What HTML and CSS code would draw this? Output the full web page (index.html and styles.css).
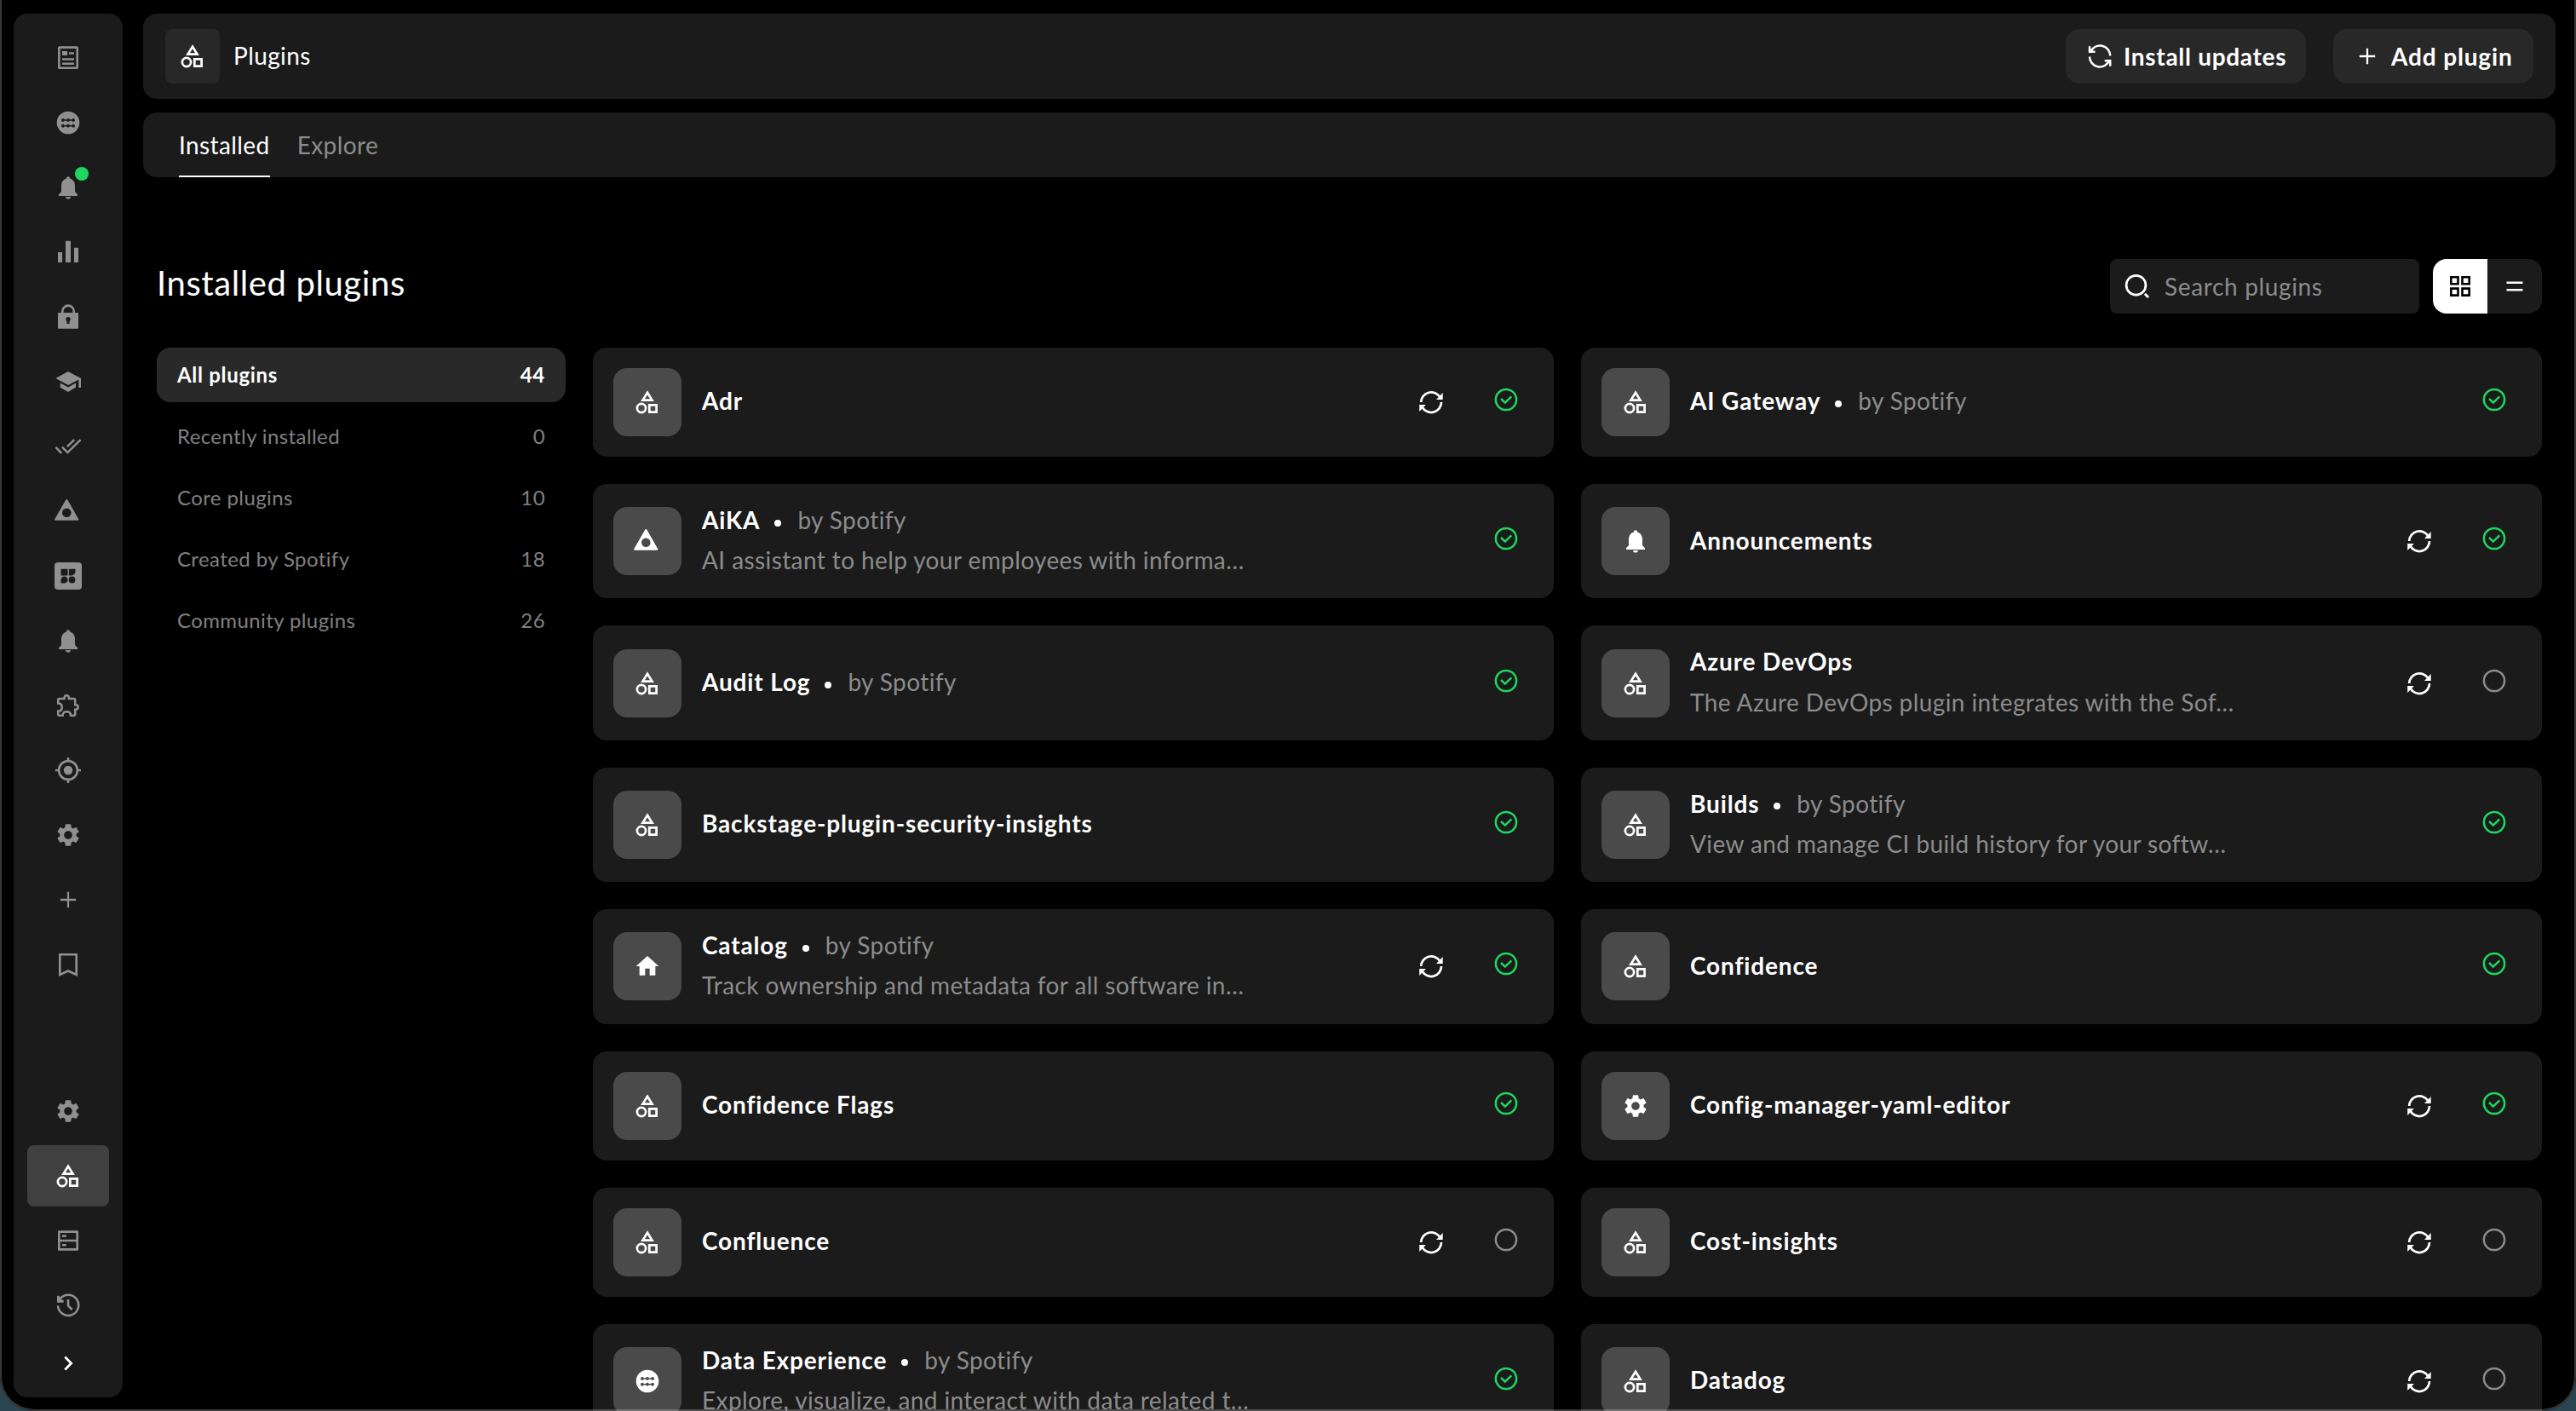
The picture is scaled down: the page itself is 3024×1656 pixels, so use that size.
FILE: index.html
```html
<!DOCTYPE html>
<html lang="en">
<head>
    <meta charset="UTF-8">
    <title>Plugins</title>
    <link rel="stylesheet" href="styles.css">
</head>
<body>
    <!-- Icon sprite -->
    <svg class="sprite" xmlns="http://www.w3.org/2000/svg">
        <symbol id="i-shapes" viewBox="0 0 32 32"><g fill="none" stroke="currentColor" stroke-width="2.7"><path d="M16 4.8 21.5 13.6H10.5z"/><circle cx="9" cy="23" r="5.1"/><path d="M18.3 19.3h8.3v8.3h-8.3z"/></g></symbol>
        <symbol id="i-article" viewBox="0 0 32 32"><rect x="5.3" y="3.6" width="21.4" height="24.2" rx=".6" fill="none" stroke="currentColor" stroke-width="2.6"/><path fill="currentColor" d="M9 8h6v5H9zM17 9.2h6v2.6h-6zM9 16.2h14v2.6H9zM9 21.4h14V24H9z"/></symbol>
        <symbol id="i-data" viewBox="0 0 32 32"><path fill="currentColor" fill-rule="evenodd" d="M16 2.7a13.3 13.3 0 1 1 0 26.6 13.3 13.3 0 0 1 0-26.6zM10 11a2 2 0 0 0 0 4 2 2 0 0 0 1.7-1.2h2.5a2 2 0 0 0 3.6 0h2.5A2 2 0 0 0 22 15a2 2 0 0 0 0-4 2 2 0 0 0-1.7 1.2h-2.5a2 2 0 0 0-3.6 0h-2.5A2 2 0 0 0 10 11zm0 6.8a2 2 0 0 0 0 4 2 2 0 0 0 1.7-1.2h2.5a2 2 0 0 0 3.6 0h2.5a2 2 0 0 0 1.7 1.2 2 2 0 0 0 0-4 2 2 0 0 0-1.7 1.2h-2.5a2 2 0 0 0-3.6 0h-2.5a2 2 0 0 0-1.7-1.2z"/></symbol>
        <symbol id="i-bell" viewBox="0 0 32 32"><path fill="currentColor" d="M16 3.3c1.3 0 2 .9 2 2.2 4 1 6 4.5 6 8.5v7l3 3.3V26H5v-1.7L8 21v-7c0-4 2-7.5 6-8.5 0-1.3.7-2.2 2-2.2zM13 27h6c0 1.6-1.3 2.6-3 2.6s-3-1-3-2.6z"/></symbol>
        <symbol id="i-bars" viewBox="0 0 32 32"><path fill="currentColor" d="M4 16h5v12H4zM13 2.7h6V28h-6zM23 10.7h5V28h-5z"/></symbol>
        <symbol id="i-lock" viewBox="0 0 32 32"><path fill="none" stroke="currentColor" stroke-width="2.6" d="M9.3 12V9.3a6.7 6.7 0 0 1 13.4 0V12"/><path fill="currentColor" fill-rule="evenodd" d="M5 11h22a1 1 0 0 1 1 1v16.700a1 1 0 0 1-1 1H5a1 1 0 0 1-1-1V12a1 1 0 0 1 1-1zm11 5a2.700 2.700 0 0 0-1.600 4.900V24h3.200v-3.100A2.700 2.700 0 0 0 16 16z"/></symbol>
        <symbol id="i-school" viewBox="0 0 32 32"><path fill="currentColor" d="M16 4 31 12v11h-2.700v-9.500L16 20 1.300 12zM6.700 17.400 16 22.500l9-5v5L16 28l-9.300-5.300z"/></symbol>
        <symbol id="i-done" viewBox="0 0 32 32"><path fill="none" stroke="currentColor" stroke-width="2.5" d="M8.900 16.600 15.400 23.100 30.600 8.200M14.900 16.200 23.200 8.200M1.500 16.900 8.200 23.800"/></symbol>
        <symbol id="i-aika" viewBox="0 0 32 32"><path fill="currentColor" fill-rule="evenodd" d="M13.200 2.700a1.300 1.300 0 0 1 2.200 0L28.200 25.200c.4.8 0 1.500-.8 1.500H1.100c-.8 0-1.200-.7-.8-1.500zM14.300 12.400a5.300 5.300 0 1 0 0 10.600 5.300 5.300 0 0 0 0-10.600z"/></symbol>
        <symbol id="i-blocks" viewBox="0 0 32 32"><path fill="currentColor" fill-rule="evenodd" d="M4 0h24a4 4 0 0 1 4 4v24a4 4 0 0 1-4 4H4a4 4 0 0 1-4-4V4a4 4 0 0 1 4-4zM8.200 7.700c-.4 0-.7.3-.7.7v6.400c0 .4.3.7.7.7h7.300V7.700zm8.700 0v7.800h2.800c2.800 0 4.800-2 4.800-4.900V8.400c0-.4-.3-.7-.7-.7zM11.500 16.600c-2.400 0-4 1.700-4 4v3.100c0 .4.3.7.7.7h3.300c2.400 0 4-1.700 4-3.900s-1.600-3.900-4-3.900zm9 0a3.900 3.900 0 1 0 0 7.800 3.900 3.900 0 0 0 0-7.800z"/></symbol>
        <symbol id="i-puzzle" viewBox="0 0 32 32"><path fill="none" stroke="currentColor" stroke-width="2.5" d="M5.400 7.900h6.200V6.800a2.600 2.600 0 0 1 5.300 0v1.100H23a1.200 1.200 0 0 1 1.200 1.200v6.200h.7a2.700 2.700 0 0 1 0 5.400h-.7v5.900a1.200 1.200 0 0 1-1.200 1.200h-4c0-3-2-4.600-4.700-4.600s-4.700 1.600-4.700 4.600H5.400a1.200 1.200 0 0 1-1.200-1.200v-4c3 0 4.600-2 4.600-4.600s-1.600-4.600-4.600-4.600V9.100a1.200 1.200 0 0 1 1.200-1.200z"/></symbol>
        <symbol id="i-target" viewBox="0 0 32 32"><circle cx="16" cy="16" r="10.9" fill="none" stroke="currentColor" stroke-width="2.6"/><circle cx="16" cy="16" r="5.3" fill="currentColor"/><path stroke="currentColor" stroke-width="2.6" d="M16 1v4.5M16 26.5V31M1 16h4.5M26.5 16H31"/></symbol>
        <symbol id="i-gear" viewBox="0 0 24 24"><path fill="currentColor" d="M19.140 12.940c.04-.3.060-.61.060-.94 0-.32-.02-.64-.07-.94l2.030-1.580c.18-.14.230-.41.120-.61l-1.920-3.320c-.12-.22-.37-.29-.59-.22l-2.390.96c-.5-.38-1.030-.7-1.620-.94l-.36-2.540c-.04-.24-.24-.41-.48-.41h-3.840c-.24 0-.43.170-.47.410l-.36 2.540c-.59.240-1.130.570-1.620.940l-2.390-.96c-.22-.08-.47 0-.59.220L2.740 8.870c-.12.210-.08.470.12.610l2.030 1.580c-.05.300-.09.630-.09.940s.02.640.070.940l-2.030 1.580c-.18.140-.23.410-.12.610l1.920 3.320c.12.220.37.290.59.220l2.390-.96c.5.380 1.030.700 1.620.940l.36 2.540c.05.240.24.410.48.410h3.840c.24 0 .44-.17.470-.41l.36-2.540c.59-.24 1.130-.56 1.620-.94l2.390.96c.22.080.47 0 .59-.22l1.920-3.320c.12-.22.070-.47-.12-.61zM12 15.600c-1.980 0-3.600-1.620-3.600-3.600s1.620-3.600 3.600-3.600 3.600 1.620 3.600 3.600-1.620 3.600-3.600 3.600z"/></symbol>
        <symbol id="i-plus" viewBox="0 0 32 32"><path stroke="currentColor" stroke-width="2.3" d="M16 6.800v18.400M6.800 16h18.400"/></symbol>
        <symbol id="i-bookmark" viewBox="0 0 32 32"><path fill="none" stroke="currentColor" stroke-width="2.6" d="M6.300 4.300h19.400v23.600L16 23.500l-9.700 4.400z"/></symbol>
        <symbol id="i-server" viewBox="0 0 32 32"><path fill="none" stroke="currentColor" stroke-width="2.6" stroke-linejoin="round" d="M5.300 5.600h21.400v20.800H5.300zM5.300 16h21.400"/><path fill="currentColor" d="M9 9.300h4.700V12H9zM9 19.900h4.700v2.700H9z"/></symbol>
        <symbol id="i-history" viewBox="0 0 32 32"><path fill="none" stroke="currentColor" stroke-width="2.6" d="M4 16.500A12.100 12.100 0 1 0 6.300 8.700"/><path fill="none" stroke="currentColor" stroke-width="2.6" d="M16 9v7.300l4.700 4.700"/><path fill="currentColor" d="M3 4.700h2.600l1 4 4.100 1.400v2.600H3z"/></symbol>
        <symbol id="i-chevron" viewBox="0 0 32 32"><path fill="none" stroke="currentColor" stroke-width="2.8" d="M12.300 8.500 19.600 16l-7.300 7.500"/></symbol>
        <symbol id="i-install" viewBox="0 0 32 32"><path fill="none" stroke="currentColor" stroke-width="2.5" d="M4 4.300v6.500h6.500M5 11.200A12 12 0 0 1 28.200 15.600M28.200 27.700v-6.500h-6.500M27.200 20.800A12 12 0 0 1 4 16.400"/></symbol>
        <symbol id="i-refresh" viewBox="0 0 32 32"><path fill="none" stroke="currentColor" stroke-width="2.7" d="M4.200 16A12 12 0 0 1 26.400 10M28 16A12 12 0 0 1 5.600 22"/><path fill="currentColor" d="M29.700 5v8H22zM2.200 27v-8h7.700z"/></symbol>
        <symbol id="i-check" viewBox="0 0 32 32"><circle cx="16" cy="16" r="12.1" fill="none" stroke="currentColor" stroke-width="2.5"/><path fill="none" stroke="currentColor" stroke-width="2.5" d="M10 15l4.800 4.600 7.500-7.300"/></symbol>
        <symbol id="i-circle" viewBox="0 0 32 32"><circle cx="16" cy="16" r="12.1" fill="none" stroke="currentColor" stroke-width="2.5"/></symbol>
        <symbol id="i-home" viewBox="0 0 24 24"><path fill="currentColor" d="M10 20v-6h4v6h5v-8h3L12 3 2 12h3v8z"/></symbol>
        <symbol id="i-search" viewBox="0 0 32 32"><circle cx="14.5" cy="14.7" r="11.4" fill="none" stroke="currentColor" stroke-width="2.7"/><path stroke="currentColor" stroke-width="3" d="M24.800 24.800l4.200 4.200"/></symbol>
        <symbol id="i-grid" viewBox="0 0 32 32"><path fill="none" stroke="currentColor" stroke-width="2.6" d="M5.300 5.300h8.200v8H5.300zM18.500 5.300h8.200v8h-8.200zM5.300 18.600h8.200v8H5.300zM18.500 18.600h8.200v8h-8.200z"/></symbol>
        <symbol id="i-list" viewBox="0 0 32 32"><path stroke="currentColor" stroke-width="2.6" d="M6.500 11.700h19M6.500 20.300h19"/></symbol>
    </svg>

    <div class="window">
        <nav class="sidebar">
            <div class="sidebar-group">
                <a class="nav-item"><svg class="icon"><use href="#i-article"/></svg></a>
                <a class="nav-item"><svg class="icon"><use href="#i-data"/></svg></a>
                <a class="nav-item"><svg class="icon"><use href="#i-bell"/></svg><span class="badge"></span></a>
                <a class="nav-item"><svg class="icon"><use href="#i-bars"/></svg></a>
                <a class="nav-item"><svg class="icon"><use href="#i-lock"/></svg></a>
                <a class="nav-item"><svg class="icon"><use href="#i-school"/></svg></a>
                <a class="nav-item"><svg class="icon"><use href="#i-done"/></svg></a>
                <a class="nav-item"><svg class="icon"><use href="#i-aika"/></svg></a>
                <a class="nav-item"><svg class="icon"><use href="#i-blocks"/></svg></a>
                <a class="nav-item"><svg class="icon"><use href="#i-bell"/></svg></a>
                <a class="nav-item"><svg class="icon"><use href="#i-puzzle"/></svg></a>
                <a class="nav-item"><svg class="icon"><use href="#i-target"/></svg></a>
                <a class="nav-item"><svg class="icon"><use href="#i-gear"/></svg></a>
                <a class="nav-item"><svg class="icon"><use href="#i-plus"/></svg></a>
                <a class="nav-item"><svg class="icon"><use href="#i-bookmark"/></svg></a>
            </div>
            <div class="sidebar-group">
                <a class="nav-item"><svg class="icon"><use href="#i-gear"/></svg></a>
                <a class="nav-item active"><svg class="icon"><use href="#i-shapes"/></svg></a>
                <a class="nav-item"><svg class="icon"><use href="#i-server"/></svg></a>
                <a class="nav-item"><svg class="icon"><use href="#i-history"/></svg></a>
                <a class="nav-item expand"><svg class="icon"><use href="#i-chevron"/></svg></a>
            </div>
        </nav>

        <main class="main">
            <header class="header">
                <div class="header-icon"><svg class="icon"><use href="#i-shapes"/></svg></div>
                <h1>Plugins</h1>
                <button class="btn btn-install"><svg class="icon"><use href="#i-install"/></svg><span>Install updates</span></button>
                <button class="btn btn-add"><svg class="icon"><use href="#i-plus"/></svg><span>Add plugin</span></button>
            </header>

            <div class="tabs">
                <a class="tab selected">Installed</a>
                <a class="tab">Explore</a>
            </div>

            <section class="content">
                <div class="toolbar">
                    <h2>Installed plugins</h2>
                    <div class="search"><svg class="icon"><use href="#i-search"/></svg><span>Search plugins</span></div>
                    <div class="toggle">
                        <button class="on"><svg class="icon"><use href="#i-grid"/></svg></button>
                        <button><svg class="icon"><use href="#i-list"/></svg></button>
                    </div>
                </div>

                <div class="columns">
                    <ul class="filters">
                        <li class="current"><span>All plugins</span><span>44</span></li>
                        <li><span>Recently installed</span><span>0</span></li>
                        <li><span>Core plugins</span><span>10</span></li>
                        <li><span>Created by Spotify</span><span>18</span></li>
                        <li><span>Community plugins</span><span>26</span></li>
                    </ul>

                    <div class="plugins">
                        <div class="card">
                            <div class="card-icon"><svg class="icon"><use href="#i-shapes"/></svg></div>
                            <div class="card-text"><p class="name">Adr</p></div>
                            <div class="actions"><svg class="icon"><use href="#i-refresh"/></svg><svg class="icon status ok"><use href="#i-check"/></svg></div>
                        </div>
                        <div class="card">
                            <div class="card-icon"><svg class="icon"><use href="#i-shapes"/></svg></div>
                            <div class="card-text"><p class="name">AI Gateway<i class="dot"></i><span class="by">by Spotify</span></p></div>
                            <div class="actions"><svg class="icon status ok"><use href="#i-check"/></svg></div>
                        </div>
                        <div class="card">
                            <div class="card-icon"><svg class="icon"><use href="#i-aika"/></svg></div>
                            <div class="card-text">
                                <p class="name">AiKA<i class="dot"></i><span class="by">by Spotify</span></p>
                                <p class="desc">AI assistant to help your employees with informa…</p>
                            </div>
                            <div class="actions"><svg class="icon status ok"><use href="#i-check"/></svg></div>
                        </div>
                        <div class="card">
                            <div class="card-icon"><svg class="icon"><use href="#i-bell"/></svg></div>
                            <div class="card-text"><p class="name">Announcements</p></div>
                            <div class="actions"><svg class="icon"><use href="#i-refresh"/></svg><svg class="icon status ok"><use href="#i-check"/></svg></div>
                        </div>
                        <div class="card">
                            <div class="card-icon"><svg class="icon"><use href="#i-shapes"/></svg></div>
                            <div class="card-text"><p class="name">Audit Log<i class="dot"></i><span class="by">by Spotify</span></p></div>
                            <div class="actions"><svg class="icon status ok"><use href="#i-check"/></svg></div>
                        </div>
                        <div class="card">
                            <div class="card-icon"><svg class="icon"><use href="#i-shapes"/></svg></div>
                            <div class="card-text">
                                <p class="name">Azure DevOps</p>
                                <p class="desc">The Azure DevOps plugin integrates with the Sof…</p>
                            </div>
                            <div class="actions"><svg class="icon"><use href="#i-refresh"/></svg><svg class="icon status"><use href="#i-circle"/></svg></div>
                        </div>
                        <div class="card">
                            <div class="card-icon"><svg class="icon"><use href="#i-shapes"/></svg></div>
                            <div class="card-text"><p class="name">Backstage-plugin-security-insights</p></div>
                            <div class="actions"><svg class="icon status ok"><use href="#i-check"/></svg></div>
                        </div>
                        <div class="card">
                            <div class="card-icon"><svg class="icon"><use href="#i-shapes"/></svg></div>
                            <div class="card-text">
                                <p class="name">Builds<i class="dot"></i><span class="by">by Spotify</span></p>
                                <p class="desc">View and manage CI build history for your softw…</p>
                            </div>
                            <div class="actions"><svg class="icon status ok"><use href="#i-check"/></svg></div>
                        </div>
                        <div class="card">
                            <div class="card-icon"><svg class="icon"><use href="#i-home"/></svg></div>
                            <div class="card-text">
                                <p class="name">Catalog<i class="dot"></i><span class="by">by Spotify</span></p>
                                <p class="desc">Track ownership and metadata for all software in…</p>
                            </div>
                            <div class="actions"><svg class="icon"><use href="#i-refresh"/></svg><svg class="icon status ok"><use href="#i-check"/></svg></div>
                        </div>
                        <div class="card">
                            <div class="card-icon"><svg class="icon"><use href="#i-shapes"/></svg></div>
                            <div class="card-text"><p class="name">Confidence</p></div>
                            <div class="actions"><svg class="icon status ok"><use href="#i-check"/></svg></div>
                        </div>
                        <div class="card">
                            <div class="card-icon"><svg class="icon"><use href="#i-shapes"/></svg></div>
                            <div class="card-text"><p class="name">Confidence Flags</p></div>
                            <div class="actions"><svg class="icon status ok"><use href="#i-check"/></svg></div>
                        </div>
                        <div class="card">
                            <div class="card-icon"><svg class="icon"><use href="#i-gear"/></svg></div>
                            <div class="card-text"><p class="name">Config-manager-yaml-editor</p></div>
                            <div class="actions"><svg class="icon"><use href="#i-refresh"/></svg><svg class="icon status ok"><use href="#i-check"/></svg></div>
                        </div>
                        <div class="card">
                            <div class="card-icon"><svg class="icon"><use href="#i-shapes"/></svg></div>
                            <div class="card-text"><p class="name">Confluence</p></div>
                            <div class="actions"><svg class="icon"><use href="#i-refresh"/></svg><svg class="icon status"><use href="#i-circle"/></svg></div>
                        </div>
                        <div class="card">
                            <div class="card-icon"><svg class="icon"><use href="#i-shapes"/></svg></div>
                            <div class="card-text"><p class="name">Cost-insights</p></div>
                            <div class="actions"><svg class="icon"><use href="#i-refresh"/></svg><svg class="icon status"><use href="#i-circle"/></svg></div>
                        </div>
                        <div class="card">
                            <div class="card-icon"><svg class="icon"><use href="#i-data"/></svg></div>
                            <div class="card-text">
                                <p class="name">Data Experience<i class="dot"></i><span class="by">by Spotify</span></p>
                                <p class="desc">Explore, visualize, and interact with data related t…</p>
                            </div>
                            <div class="actions"><svg class="icon status ok"><use href="#i-check"/></svg></div>
                        </div>
                        <div class="card">
                            <div class="card-icon"><svg class="icon"><use href="#i-shapes"/></svg></div>
                            <div class="card-text"><p class="name">Datadog</p></div>
                            <div class="actions"><svg class="icon"><use href="#i-refresh"/></svg><svg class="icon status"><use href="#i-circle"/></svg></div>
                        </div>
                    </div>
                </div>
            </section>
        </main>
    </div>
</body>
</html>
```
FILE: styles.css
```css
* {
    box-sizing: border-box;
}
body {
    margin: 0;
    background-color: #2b4650;
    color: #fff;
    font-family: Lato, 'Open Sans', sans-serif;
    font-size: 28px;
    letter-spacing: 0.4px;
    overflow: hidden;
}
h1, h2, p, ul {
    margin: 0;
    padding: 0;
    font-weight: 400;
}
button {
    border: none;
    font: inherit;
    color: inherit;
    padding: 0;
}
.sprite {
    display: none;
}
.icon {
    display: block;
    width: 32px;
    height: 32px;
    flex: none;
}

.window {
    position: relative;
    display: flex;
    gap: 24px;
    height: 100vh;
    padding: 16px 24px 0 16px;
    background-color: #000;
    border-radius: 0 0 40px 40px;
    overflow: hidden;
}
/* thin window outline, drawn over the content */
.window::after {
    content: '';
    position: absolute;
    inset: 0;
    border: 2px solid rgba(255, 255, 255, 0.22);
    border-top: none;
    border-radius: 0 0 40px 40px;
}

/* Sidebar */
.sidebar {
    display: flex;
    flex-direction: column;
    justify-content: space-between;
    width: 128px;
    height: calc(100vh - 32px);
    padding: 16px 16px 12px;
    background-color: #1b1b1b;
    border-radius: 16px;
    flex: none;
}
.sidebar-group {
    display: flex;
    flex-direction: column;
    gap: 4px;
}
.nav-item {
    position: relative;
    display: flex;
    align-items: center;
    justify-content: center;
    height: 72px;
    border-radius: 8px;
    color: #909090;
}
.nav-item.active {
    background-color: #404040;
    color: #fff;
}
.nav-item.expand {
    height: 56px;
    color: #fff;
}
.badge {
    position: absolute;
    top: 12px;
    right: 24px;
    width: 16px;
    height: 16px;
    border-radius: 50%;
    background-color: #1ed760;
}

/* Header and tabs */
.main {
    flex: 1;
    min-width: 0;
}
.header {
    display: flex;
    align-items: center;
    height: 100px;
    padding: 0 26px;
    background-color: #1b1b1b;
    border-radius: 16px;
}
.header-icon {
    display: flex;
    align-items: center;
    justify-content: center;
    width: 64px;
    height: 64px;
    border-radius: 8px;
    background-color: #282828;
}
h1 {
    margin: 0 auto 2px 16px;
    font-size: 28px;
}
.btn {
    display: flex;
    align-items: center;
    gap: 12px;
    height: 64px;
    padding: 0 0 0 24px;
    border-radius: 16px;
    background-color: #282828;
    font-weight: 700;
    letter-spacing: 0.7px;
}
.btn-install {
    width: 282px;
}
.btn-add {
    width: 235px;
    margin-left: 32px;
    letter-spacing: 0.85px;
}
.btn span {
    padding-bottom: 1px;
    white-space: nowrap;
}
.tabs {
    display: flex;
    gap: 32px;
    height: 76px;
    margin-top: 16px;
    padding-left: 42px;
    background-color: #1b1b1b;
    border-radius: 16px;
}
.tab {
    padding-top: 3px;
    line-height: 71px;
    color: #8c8c8c;
    border-bottom: 2px solid transparent;
}
.tab.selected {
    color: #fff;
    border-color: #fff;
}

/* Content */
.content {
    padding: 96px 16px 0;
}
.toolbar {
    display: flex;
    align-items: center;
    height: 64px;
}
h2 {
    margin-right: auto;
    padding-bottom: 9px;
    font-size: 40px;
    letter-spacing: 0.6px;
}
.search {
    display: flex;
    align-items: center;
    gap: 16px;
    width: 363px;
    height: 64px;
    padding-left: 16px;
    border-radius: 8px;
    background-color: #1b1b1b;
    letter-spacing: 0.65px;
}
.search span {
    color: #8c8c8c;
}
.toggle {
    display: flex;
    width: 128px;
    height: 64px;
    margin-left: 16px;
    border-radius: 16px;
    overflow: hidden;
}
.toggle button {
    display: flex;
    align-items: center;
    justify-content: center;
    width: 64px;
    background-color: #1b1b1b;
}
.toggle .on {
    background-color: #fff;
    color: #000;
}
.columns {
    display: flex;
    gap: 32px;
    margin-top: 40px;
}
.filters {
    display: flex;
    flex-direction: column;
    gap: 8px;
    width: 480px;
    flex: none;
    list-style: none;
}
.filters li {
    display: flex;
    align-items: center;
    justify-content: space-between;
    height: 64px;
    padding: 0 24px 2px;
    border-radius: 16px;
    font-size: 24px;
    color: #808080;
}
.filters .current {
    background-color: #292929;
    color: #fff;
    font-weight: 700;
    letter-spacing: 0.7px;
}

/* Plugin cards */
.plugins {
    display: grid;
    grid-template-columns: 1fr 1fr;
    gap: 32px;
    flex: 1;
}
.card {
    display: flex;
    align-items: center;
    padding: 24px;
    border-radius: 16px;
    background-color: #1b1b1b;
}
.card-icon {
    display: flex;
    align-items: center;
    justify-content: center;
    width: 80px;
    height: 80px;
    border-radius: 16px;
    background-color: #4a4a4a;
    flex: none;
}
.card-text {
    display: flex;
    flex-direction: column;
    gap: 10px;
    margin-left: 24px;
    padding-bottom: 2px;
    line-height: 37.2px;
    white-space: nowrap;
}
.name {
    display: flex;
    align-items: center;
    font-weight: 700;
    letter-spacing: 0.85px;
}
.dot {
    width: 8px;
    height: 8px;
    margin: 6px 19px 0 17px;
    border-radius: 50%;
    background-color: #fff;
}
.by, .desc {
    font-weight: 400;
    letter-spacing: 0.4px;
    color: #8c8c8c;
}
.actions {
    display: flex;
    align-items: center;
    gap: 56px;
    margin-left: auto;
    padding-right: 16px;
}
.status {
    margin-bottom: 6px;
    color: #8c8c8c;
}
.status.ok {
    color: #1ed760;
}
```
